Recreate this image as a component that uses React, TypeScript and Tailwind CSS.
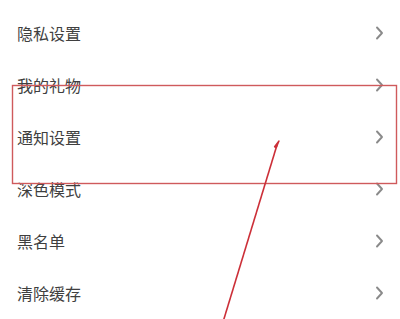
const items = ["隐私设置", "我的礼物", "通知设置", "深色模式", "黑名单", "清除缓存"];

function Chevron() {
  return (
    <svg width="9" height="14" viewBox="0 0 9 14" className="shrink-0">
      <polyline points="2,1.5 7,7 2,12.5" fill="none" stroke="#8a8a8a" strokeWidth="1.9" strokeLinecap="round" strokeLinejoin="round" />
    </svg>
  );
}

export default function App() {
  return (
    <div
      className="relative w-[400px] h-[319px] overflow-hidden bg-white pt-[7px]"
      style={{ fontFamily: '"Noto Sans CJK SC", "Noto Sans", sans-serif' }}
    >
      {items.map((label) => (
        <div key={label} className="flex h-[52px] items-center justify-between pl-[17px] pr-[16px]">
          <span className="text-[16px] leading-none text-[#3f3f3f]">{label}</span>
          <Chevron />
        </div>
      ))}

      {/* annotation: highlight box + arrow */}
      <svg className="pointer-events-none absolute left-0 top-0" width="400" height="319" viewBox="0 0 400 319">
        <rect x="12.5" y="85.5" width="384" height="98" fill="none" stroke="#cf5a5c" strokeWidth="1.4" />
        <line x1="223" y1="322" x2="277" y2="145" stroke="#cc2f38" strokeWidth="1.6" />
        <polygon points="279,141 276.2,147.5 274.6,146.8" fill="#cc2f38" stroke="#cc2f38" strokeWidth="1.5" strokeLinejoin="round" />
      </svg>
    </div>
  );
}
